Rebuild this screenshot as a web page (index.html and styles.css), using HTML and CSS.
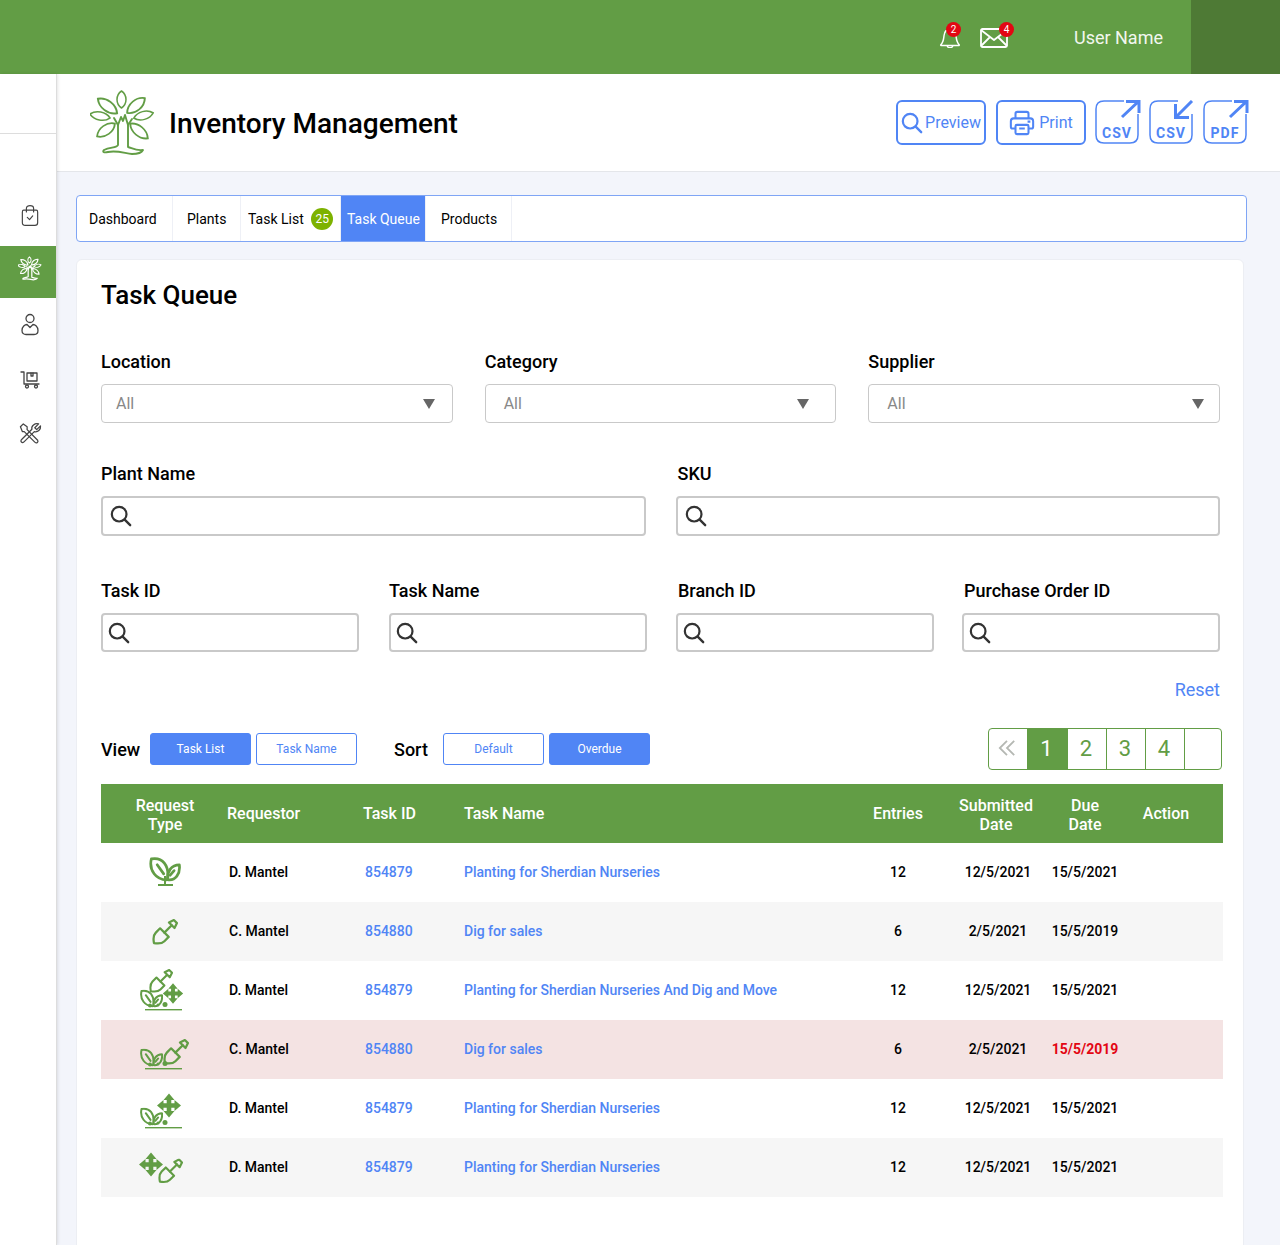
FILE: index.html
```html
<!DOCTYPE html>
<html lang="en">
<head>
    <meta charset="UTF-8">
    <title>Inventory Management</title>
    <link rel="stylesheet" href="styles.css">
</head>
<body>

    <svg class="defs" width="0" height="0">
        <defs>
            <path id="leaf" d="M0 -10C7.500 -5 7.500 5 0 10C-7.500 5 -7.500 -5 0 -10Z"/>
            <symbol id="tree" viewBox="0 0 66 66">
                <g fill="none" stroke="currentColor" stroke-linejoin="round" stroke-linecap="round">
                    <use href="#leaf" transform="translate(31.500 9.500) scale(.8 .85)"/>
                    <use href="#leaf" transform="translate(17.500 16) rotate(-53) scale(.9 1.2)"/>
                    <use href="#leaf" transform="translate(46 15.500) rotate(50) scale(.9 1.15)"/>
                    <use href="#leaf" transform="translate(10 26) rotate(-79) scale(.72 1.02)"/>
                    <use href="#leaf" transform="translate(53.500 25.500) rotate(75) scale(.72 1)"/>
                    <use href="#leaf" transform="translate(16 40) rotate(54) scale(.85 1.1)"/>
                    <use href="#leaf" transform="translate(49 41) rotate(-50) scale(.85 1.15)"/>
                    <path d="M24 28L28 35L31 27L33 31L35 25L38 35L42 29"/>
                    <path d="M28 35V55C27 58 20 57 14 60C12 62 14 63 18 62C26 60 34 63 42 64C48 64 52 62 53 60C46 61 42 58 38 57V35"/>
                </g>
            </symbol>
            <symbol id="plant" viewBox="0 0 24 20">
                <g fill="none" stroke="currentColor" stroke-width="2.100" stroke-linejoin="round" stroke-linecap="round">
                    <path d="M1.500 1.500C10 0 15.500 6 14 17.500C5 18 -.5 10 1.500 1.500Z"/>
                    <path d="M23 6C24 13 20 18.500 14 17.500C13.500 11 17 6 23 6Z"/>
                    <path d="M6 6L11 13M19 10.500L16 14"/>
                </g>
            </symbol>
            <symbol id="shovel" viewBox="-15 -15 30 30">
                <g transform="rotate(45)" fill="none" stroke="currentColor" stroke-width="2.600" stroke-linejoin="round" stroke-linecap="round">
                    <path d="M-7 1H7V8C7 13 3 16 0 18C-3 16 -7 13 -7 8Z"/>
                    <path d="M0 1V-11"/>
                    <path d="M-4.500 -11H4.500L2.500 -17H-2.500Z"/>
                </g>
            </symbol>
            <symbol id="move" viewBox="0 0 26 26">
                <path fill="currentColor" d="M13 1L18.500 7.500H15.300V10.700H18.500V7.500L25 13L18.500 18.500V15.300H15.300V18.500H18.500L13 25L7.500 18.500H10.700V15.300H7.500V18.500L1 13L7.500 7.500V10.700H10.700V7.500H7.500Z"/>
            </symbol>
            <g id="ground" fill="#629d45">
                <rect x="10" y="40" width="37" height="1.400"/>
                <circle cx="15" cy="36.500" r="2"/>
                <circle cx="23" cy="36" r="1.500"/>
                <circle cx="30" cy="35.500" r="2.500"/>
            </g>
            <symbol id="search" viewBox="0 0 24 24">
                <circle cx="10" cy="10" r="8" fill="none" stroke="currentColor" stroke-width="2.400"/>
                <path d="M16 16L22 22" stroke="currentColor" stroke-width="2.600" stroke-linecap="round"/>
            </symbol>
            <path id="corner-box" d="M29 1H9C4 1 1 4 1 9V35C1 40 4 43 9 43H35C40 43 43 40 43 35V14" fill="none" stroke="#5085f5" stroke-width="1.500"/>
        </defs>
    </svg>

    <header class="topbar">
        <div class="alert bell">
            <svg width="22" height="20" viewBox="0 0 24 24" preserveAspectRatio="none" fill="none" stroke="#fff" stroke-width="1.600" stroke-linejoin="round">
                <path d="M2 20C5 17 5 13 5.500 9C6 4 9 1.500 12 1.500C15 1.500 18 4 18.500 9C19 13 19 17 22 20C22.500 21 22 21 21 21H3C2 21 1.500 21 2 20Z"/>
                <path d="M9 21C9 24.500 15 24.500 15 21"/>
            </svg>
            <span class="alert-count">2</span>
        </div>
        <div class="alert mail">
            <svg width="28" height="20" viewBox="0 0 28 20" fill="none" stroke="#fff" stroke-width="1.800" stroke-linejoin="round">
                <rect x="1" y="1" width="26" height="18" rx="1.500"/>
                <path d="M1 2L14 12L27 2M1 18L10 9M27 18L18 9"/>
            </svg>
            <span class="alert-count">4</span>
        </div>
        <div class="user-name">User Name</div>
        <div class="user-box"></div>
    </header>

    <div class="layout">
        <nav class="sidebar">
            <div class="side-top"></div>
            <div class="side-list">
                <a class="side-item first">
                    <svg width="18" height="23" viewBox="0 0 20 24" fill="none" stroke="#444" stroke-width="1.300" stroke-linejoin="round" stroke-linecap="round">
                        <path d="M3 6H17C18 6 18.500 7 18.500 8V20C18.500 22 17 23 15.500 23H4.500C3 23 1.500 22 1.500 20V8C1.500 7 2 6 3 6Z"/>
                        <path d="M6 8V4C6 2 8 1 10 1C12 1 14 2 14 4V8"/>
                        <path d="M7 14L9.500 16.500L13 12.500"/>
                    </svg>
                </a>
                <a class="side-item active">
                    <svg class="tree-white" width="24" height="25"><use href="#tree"/></svg>
                </a>
                <a class="side-item person">
                    <svg width="18" height="23" viewBox="0 0 18 22" fill="none" stroke="#444" stroke-width="1.300" stroke-linejoin="round">
                        <circle cx="9" cy="5" r="4"/>
                        <path d="M1 17C1 13 4 11 6 11L9 14L12 11C14 11 17 13 17 17C17 20 15 21 13 21H5C3 21 1 20 1 17Z"/>
                    </svg>
                </a>
                <a class="side-item">
                    <svg width="20" height="18" viewBox="0 0 20 18" fill="none" stroke="#444" stroke-width="1.300" stroke-linejoin="round" stroke-linecap="round">
                        <path d="M1 1H4V13H19"/>
                        <rect x="7" y="2" width="10" height="8"/>
                        <path d="M11 2V5H13V2"/>
                        <circle cx="7" cy="15.500" r="1.500"/>
                        <circle cx="16" cy="15.500" r="1.500"/>
                    </svg>
                </a>
                <a class="side-item tools">
                    <svg width="24" height="23" viewBox="0 0 24 24" fill="none" stroke="#444" stroke-width="1.300" stroke-linejoin="round">
                        <path d="M2 5L5 2L9 5V8L20 19C21 21 19 23 17 21L6 10H4Z"/>
                        <path d="M21 2L17 6L19 8L23 4C23.500 8 20 11 16.500 10L6 20.500C4 23 1 20 3.500 18L14 7.500C13 4 17 1 21 2Z"/>
                    </svg>
                </a>
            </div>
        </nav>

        <div class="content">
            <div class="titlebar">
                <svg class="logo" width="66" height="66"><use href="#tree"/></svg>
                <div class="page-title">Inventory Management</div>
                <div class="actions">
                    <a class="act-btn preview"><svg width="22" height="22"><use href="#search"/></svg>Preview</a>
                    <a class="act-btn print">
                        <svg width="26" height="26" viewBox="0 0 28 28" fill="none" stroke="#5085f5" stroke-width="2.200" stroke-linejoin="round">
                            <path d="M7 9V4C7 2.500 8 2 9 2H19C20 2 21 2.500 21 4V9"/>
                            <path d="M7 20H4C2.500 20 2 19 2 18V12C2 10 3 9 5 9H23C25 9 26 10 26 12V18C26 19 25.500 20 24 20H21"/>
                            <rect x="7" y="16" width="14" height="10" rx="1.500"/>
                            <path d="M11 20H17M20 12.500H23"/>
                        </svg>
                        Print
                    </a>
                    <svg class="file-btn" width="46" height="46" viewBox="0 0 46 46">
                        <use href="#corner-box"/>
                        <path d="M27 17L44 1M31 1.500H44V13" fill="none" stroke="#5085f5" stroke-width="3"/>
                        <text x="22" y="38" class="file-text">CSV</text>
                    </svg>
                    <svg class="file-btn" width="46" height="46" viewBox="0 0 46 46">
                        <use href="#corner-box"/>
                        <path d="M43 1L27 17M26.500 4V17.500H40" fill="none" stroke="#5085f5" stroke-width="3"/>
                        <text x="22" y="38" class="file-text">CSV</text>
                    </svg>
                    <svg class="file-btn" width="46" height="46" viewBox="0 0 46 46">
                        <use href="#corner-box"/>
                        <path d="M27 17L44 1M31 1.500H44V13" fill="none" stroke="#5085f5" stroke-width="3"/>
                        <text x="22" y="38" class="file-text">PDF</text>
                    </svg>
                </div>
            </div>

            <main class="main">
                <div class="tabs">
                    <a class="tab tab-dash">Dashboard</a>
                    <a class="tab tab-plants">Plants</a>
                    <a class="tab tab-list">Task List <span class="tab-count">25</span></a>
                    <a class="tab tab-queue active">Task Queue</a>
                    <a class="tab tab-products">Products</a>
                </div>

                <section class="card">
                    <h1>Task Queue</h1>

                    <div class="fields three">
                        <div class="field">
                            <label>Location</label>
                            <div class="select sel-location"><span>All</span><i class="caret"></i></div>
                        </div>
                        <div class="field">
                            <label>Category</label>
                            <div class="select sel-category"><span>All</span><i class="caret"></i></div>
                        </div>
                        <div class="field">
                            <label>Supplier</label>
                            <div class="select sel-supplier"><span>All</span><i class="caret"></i></div>
                        </div>
                    </div>

                    <div class="fields two">
                        <div class="field">
                            <label>Plant Name</label>
                            <div class="search tall"><svg width="22" height="22"><use href="#search"/></svg></div>
                        </div>
                        <div class="field">
                            <label class="nudge">SKU</label>
                            <div class="search tall"><svg width="22" height="22"><use href="#search"/></svg></div>
                        </div>
                    </div>

                    <div class="fields four">
                        <div class="field">
                            <label>Task ID</label>
                            <div class="search"><svg width="22" height="22"><use href="#search"/></svg></div>
                        </div>
                        <div class="field">
                            <label>Task Name</label>
                            <div class="search"><svg width="22" height="22"><use href="#search"/></svg></div>
                        </div>
                        <div class="field">
                            <label class="nudge">Branch ID</label>
                            <div class="search"><svg width="22" height="22"><use href="#search"/></svg></div>
                        </div>
                        <div class="field">
                            <label class="nudge">Purchase Order ID</label>
                            <div class="search"><svg width="22" height="22"><use href="#search"/></svg></div>
                        </div>
                    </div>

                    <div class="reset-row"><a class="reset">Reset</a></div>

                    <div class="toolbar">
                        <span class="tool-label">View</span>
                        <a class="pill on">Task List</a>
                        <a class="pill">Task Name</a>
                        <span class="tool-label sort-label">Sort</span>
                        <a class="pill">Default</a>
                        <a class="pill on">Overdue</a>
                        <div class="pager">
                            <a class="page first-page">
                                <svg width="18" height="18" viewBox="0 0 20 18" fill="none" stroke="#b5b8b3" stroke-width="2"><path d="M10 1L2 9L10 17M18 1L10 9L18 17"/></svg>
                            </a>
                            <a class="page current">1</a>
                            <a class="page">2</a>
                            <a class="page">3</a>
                            <a class="page">4</a>
                            <a class="page"></a>
                        </div>
                    </div>

                    <table class="tasks">
                        <colgroup>
                            <col class="c-type"><col class="c-req"><col class="c-id"><col class="c-name">
                            <col class="c-entries"><col class="c-sub"><col class="c-due"><col class="c-action">
                        </colgroup>
                        <thead>
                            <tr>
                                <th class="mid wrap">Request<br>Type</th>
                                <th class="shift">Requestor</th>
                                <th class="shift">Task ID</th>
                                <th>Task Name</th>
                                <th class="mid">Entries</th>
                                <th class="mid wrap">Submitted<br>Date</th>
                                <th class="mid wrap">Due<br>Date</th>
                                <th class="mid action">Action</th>
                            </tr>
                        </thead>
                        <tbody>
                            <tr>
                                <td class="mid icon"><svg class="req" width="60" height="44" viewBox="0 0 60 44">
                                    <use href="#plant" x="14" y="6" width="32" height="26"/>
                                    <path d="M30 25V33M23 34H38" stroke="#629d45" stroke-width="2" fill="none"/>
                                </svg></td>
                                <td>D. Mantel</td><td><a>854879</a></td><td><a>Planting for Sherdian Nurseries</a></td>
                                <td class="mid">12</td><td class="mid sub">12/5/2021</td><td class="mid">15/5/2021</td><td></td>
                            </tr>
                            <tr class="grey">
                                <td class="mid icon"><svg class="req" width="60" height="44" viewBox="0 0 60 44">
                                    <use href="#shovel" x="17" y="8.500" width="26" height="27"/>
                                </svg></td>
                                <td>C. Mantel</td><td><a>854880</a></td><td><a>Dig for sales</a></td>
                                <td class="mid">6</td><td class="mid sub">2/5/2021</td><td class="mid">15/5/2019</td><td></td>
                            </tr>
                            <tr>
                                <td class="mid icon"><svg class="req" width="60" height="44" viewBox="0 0 60 44">
                                    <use href="#shovel" x="14" y="0" width="24" height="24"/>
                                    <use href="#move" x="27" y="13.500" width="22" height="22"/>
                                    <use href="#plant" x="5" y="20.500" width="23" height="19"/>
                                    <use href="#ground"/>
                                </svg></td>
                                <td>D. Mantel</td><td><a>854879</a></td><td><a>Planting for Sherdian Nurseries And Dig and Move</a></td>
                                <td class="mid">12</td><td class="mid sub">12/5/2021</td><td class="mid">15/5/2021</td><td></td>
                            </tr>
                            <tr class="late">
                                <td class="mid icon"><svg class="req" width="60" height="44" viewBox="0 0 60 44">
                                    <use href="#shovel" x="28" y="9" width="26" height="30"/>
                                    <use href="#plant" x="5" y="20.500" width="23" height="19"/>
                                    <use href="#ground"/>
                                </svg></td>
                                <td>C. Mantel</td><td><a>854880</a></td><td><a>Dig for sales</a></td>
                                <td class="mid">6</td><td class="mid sub">2/5/2021</td><td class="mid overdue">15/5/2019</td><td></td>
                            </tr>
                            <tr>
                                <td class="mid icon"><svg class="req" width="60" height="44" viewBox="0 0 60 44">
                                    <use href="#move" x="21" y="5.500" width="26" height="26"/>
                                    <use href="#plant" x="5" y="20.500" width="23" height="19"/>
                                    <use href="#ground"/>
                                </svg></td>
                                <td>D. Mantel</td><td><a>854879</a></td><td><a>Planting for Sherdian Nurseries</a></td>
                                <td class="mid">12</td><td class="mid sub">12/5/2021</td><td class="mid">15/5/2021</td><td></td>
                            </tr>
                            <tr class="grey">
                                <td class="mid icon"><svg class="req" width="60" height="44" viewBox="0 0 60 44">
                                    <use href="#move" x="3" y="5.500" width="26" height="26"/>
                                    <use href="#shovel" x="22" y="12.500" width="27" height="25"/>
                                </svg></td>
                                <td>D. Mantel</td><td><a>854879</a></td><td><a>Planting for Sherdian Nurseries</a></td>
                                <td class="mid">12</td><td class="mid sub">12/5/2021</td><td class="mid">15/5/2021</td><td></td>
                            </tr>
                        </tbody>
                    </table>
                </section>
            </main>
        </div>
    </div>

</body>
</html>
```

FILE: styles.css
```css
* {
    box-sizing: border-box;
}
body {
    margin: 0;
    height: 1245px;
    overflow: hidden;
    font-family: Roboto, Arial, sans-serif;
    background-color: #f3f5fb;
    color: #000;
}
.defs {
    position: absolute;
}

/* Top bar */
.topbar {
    display: flex;
    align-items: center;
    justify-content: flex-end;
    height: 74px;
    background-color: #629d45;
    color: #fff;
}
.alert {
    position: relative;
    display: flex;
    margin-top: 2px;
}
.alert.bell {
    margin-right: 19px;
}
.alert.mail {
    margin-right: 66px;
}
.alert-count {
    position: absolute;
    top: -6px;
    width: 15px;
    height: 15px;
    border-radius: 50%;
    background-color: #e30613;
    font-size: 10px;
    line-height: 15px;
    text-align: center;
}
.bell .alert-count {
    left: 7px;
}
.mail .alert-count {
    left: 19px;
}
.user-name {
    font-size: 18px;
    margin-right: 28px;
    color: #f2f7ef;
}
.user-box {
    width: 89px;
    height: 74px;
    background-color: #4e7a35;
}

.layout {
    display: flex;
}

/* Sidebar */
.sidebar {
    width: 57px;
    height: 1171px;
    flex-shrink: 0;
    background-color: #fff;
    border-right: 1px solid #ddd;
    box-shadow: 1px 0 3px rgba(0, 0, 0, 0.1);
    position: relative;
}
.side-top {
    height: 60px;
    border-bottom: 1px solid #ddd;
}
.side-list {
    display: flex;
    flex-direction: column;
    gap: 2px;
    padding-top: 55px;
}
.side-item {
    display: flex;
    align-items: center;
    justify-content: center;
    height: 52px;
    padding-left: 3px;
}
.side-item.first {
    height: 55px;
    padding-bottom: 3px;
}
.side-item.active {
    background-color: #629d45;
    padding-left: 4px;
    padding-bottom: 7px;
}
.side-item.person {
    padding-bottom: 3px;
}
.side-item.tools {
    padding-bottom: 2px;
}
.tree-white {
    color: #fff;
    stroke-width: 3.4;
}

.content {
    flex: 1;
    min-width: 0;
}

/* Title bar */
.titlebar {
    display: flex;
    align-items: center;
    height: 98px;
    padding: 0 31px 0 33px;
    background-color: #fff;
    border-bottom: 1px solid #e4e6ea;
}
.logo {
    color: #629d45;
    stroke-width: 1.9;
}
.page-title {
    margin-left: 13px;
    margin-top: 2px;
    font-size: 28px;
    font-weight: 500;
}
.actions {
    display: flex;
    align-items: center;
    gap: 8px;
    margin-left: auto;
}
.act-btn {
    display: flex;
    align-items: center;
    justify-content: center;
    gap: 2px;
    width: 90px;
    height: 45px;
    border: 2px solid #5085f5;
    border-radius: 6px;
    color: #5085f5;
    font-size: 16px;
}
.act-btn.preview {
    margin-right: 2px;
}
.act-btn.print {
    gap: 4px;
    margin-right: 1px;
}
.file-text {
    font-family: Roboto, Arial, sans-serif;
    font-size: 14px;
    font-weight: 700;
    letter-spacing: 1px;
    text-anchor: middle;
    fill: #5085f5;
}

/* Main area */
.main {
    padding: 23px 36px 0 19px;
}
.tabs {
    display: flex;
    height: 47px;
    margin-right: -3px;
    background-color: #fff;
    border: 1px solid #7fa5f5;
    border-radius: 4px;
    overflow: hidden;
}
.tab {
    display: flex;
    align-items: center;
    font-size: 14px;
    border-right: 1px solid #eef0f6;
}
.tab-dash {
    width: 96px;
    padding-left: 12px;
}
.tab-plants {
    width: 68px;
    padding-left: 14px;
}
.tab-list {
    width: 100px;
    gap: 4px;
    padding-left: 7px;
    white-space: pre;
}
.tab-queue {
    width: 85px;
    padding-left: 6px;
}
.tab-products {
    width: 86px;
    padding-left: 15px;
}
.tab.active {
    background-color: #5085f5;
    color: #fff;
}
.tab-count {
    width: 22px;
    height: 22px;
    border-radius: 50%;
    background-color: #7db200;
    color: #fff;
    font-size: 12px;
    line-height: 22px;
    text-align: center;
}

.card {
    margin-top: 17px;
    height: 1020px;
    padding: 20px 23px 0 24px;
    background-color: #fff;
    border: 1px solid #eceef3;
    border-radius: 6px;
}
h1 {
    margin: 0;
    font-size: 26px;
    line-height: 30px;
    font-weight: 500;
}

/* Filter fields */
.fields {
    display: grid;
}
.fields.three {
    grid-template-columns: repeat(3, 1fr);
    gap: 32px;
    margin-top: 42px;
}
.fields.two {
    grid-template-columns: repeat(2, 1fr);
    gap: 30px;
    margin-top: 41px;
}
.fields.four {
    grid-template-columns: 288px 287px 286px 258px;
    margin-top: 45px;
}
.fields.four .field {
    width: 258px;
}
.field label {
    display: block;
    font-size: 18px;
    line-height: 20px;
    font-weight: 500;
    margin-bottom: 12px;
}
.field label.nudge {
    padding-left: 2px;
}
.select {
    display: flex;
    align-items: center;
    justify-content: space-between;
    height: 39px;
    border: 1px solid #c9c9c9;
    border-radius: 4px;
    color: #888;
    font-size: 16px;
}
.sel-location {
    padding: 0 17px 0 14px;
}
.sel-category {
    padding: 0 26px 0 18px;
}
.sel-supplier {
    padding: 0 15px 0 18px;
}
.caret {
    width: 0;
    height: 0;
    border-left: 6px solid transparent;
    border-right: 6px solid transparent;
    border-top: 10px solid #666;
}
.search {
    display: flex;
    align-items: center;
    height: 39px;
    padding-left: 5px;
    border: 2px solid #c9c9c9;
    border-radius: 4px;
    color: #333;
}
.search.tall {
    height: 40px;
    padding-left: 7px;
}

.reset-row {
    margin-top: 28px;
    text-align: right;
    line-height: 20px;
}
.reset {
    color: #5085f5;
    font-size: 18px;
}

/* View, sort and pages */
.toolbar {
    display: flex;
    align-items: center;
    height: 42px;
    margin-top: 27px;
    margin-right: -2px;
}
.tool-label {
    width: 49px;
    font-size: 18px;
    font-weight: 500;
}
.sort-label {
    width: 49px;
    margin-left: 32px;
}
.pill {
    width: 101px;
    height: 32px;
    margin-right: 5px;
    border: 1px solid #5085f5;
    border-radius: 3px;
    color: #5085f5;
    font-size: 12px;
    line-height: 30px;
    text-align: center;
}
.pill.on {
    background-color: #5085f5;
    color: #fff;
}
.pager {
    display: grid;
    grid-template-columns: 38px 40px 39px 39px 39px 1fr;
    width: 234px;
    height: 42px;
    margin-left: auto;
    border: 1px solid #629d45;
    border-radius: 4px;
    overflow: hidden;
}
.page {
    display: flex;
    align-items: center;
    justify-content: center;
    padding-right: 2px;
    padding-bottom: 2px;
    color: #629d45;
    font-size: 22px;
    border-left: 1px solid #629d45;
}
.page.first-page {
    border-left: 0;
}
.page.current {
    background-color: #629d45;
    color: #fff;
}

/* Table */
.tasks {
    width: 1122px;
    margin-top: 14px;
    border-collapse: collapse;
    table-layout: fixed;
    font-size: 14px;
    font-weight: 500;
}
.c-type { width: 128px; }
.c-req { width: 136px; }
.c-id { width: 99px; }
.c-name { width: 381px; }
.c-entries { width: 106px; }
.c-sub { width: 90px; }
.c-due { width: 88px; }
.c-action { width: 94px; }
.tasks th {
    height: 59px;
    padding: 0;
    background-color: #629d45;
    color: #fff;
    font-size: 16px;
    line-height: 19px;
    font-weight: 500;
    text-align: left;
}
.tasks th.wrap {
    padding-top: 2px;
}
.tasks th.shift {
    text-indent: -2px;
}
.tasks th.action {
    padding-right: 20px;
}
.tasks .mid {
    text-align: center;
}
.tasks td {
    height: 59px;
    padding: 0 0 2px;
    white-space: nowrap;
}
.tasks td.icon {
    padding: 0;
}
.tasks td.sub {
    padding-left: 4px;
}
.tasks td a {
    color: #5085f5;
}
.tasks tr.grey td {
    background-color: #f6f6f6;
}
.tasks tr.late td {
    background-color: #f4e3e3;
}
.tasks td.overdue {
    color: #e30613;
    font-weight: 700;
}
.req {
    display: block;
    margin: 0 auto;
    color: #629d45;
}
```
